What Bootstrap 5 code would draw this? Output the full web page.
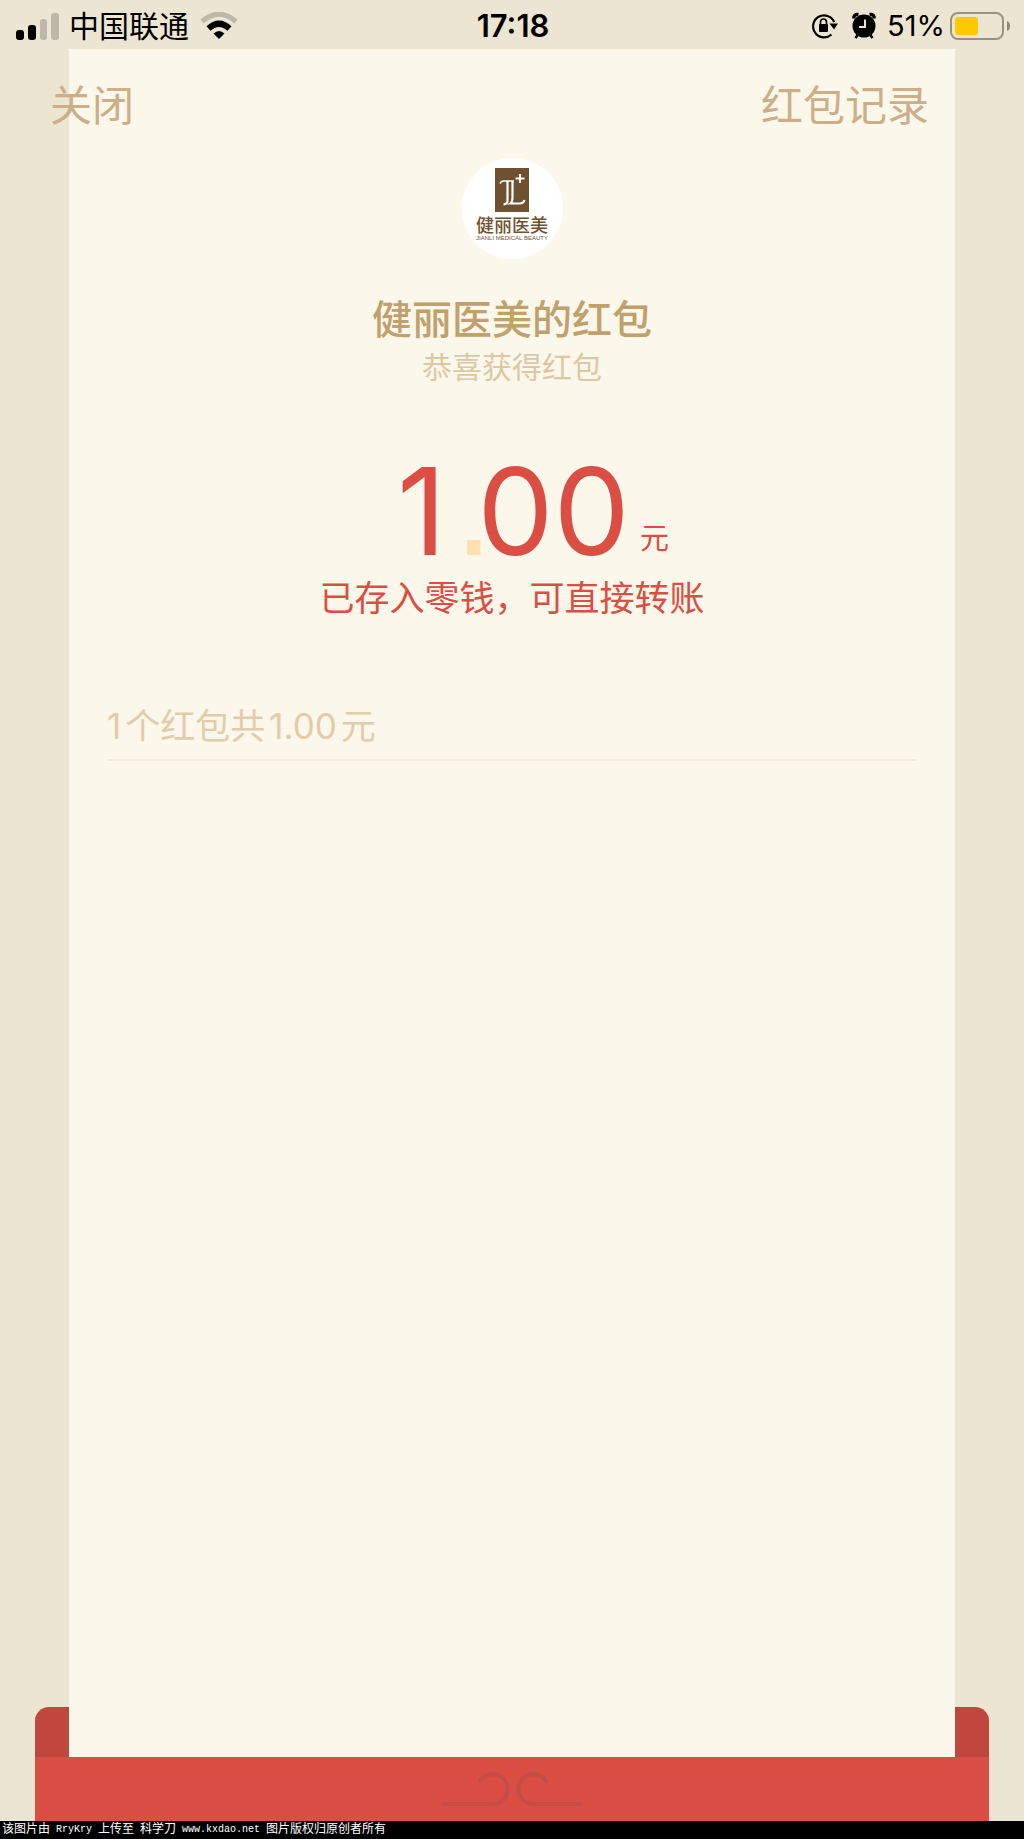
<!DOCTYPE html>
<html lang="zh-CN">
<head>
<meta charset="utf-8">
<meta name="viewport" content="width=device-width, initial-scale=1">
<title>红包</title>
<link href="https://cdn.jsdelivr.net/npm/bootstrap@5.3.0/dist/css/bootstrap.min.css" rel="stylesheet">
<style>
  body { background: #ece5d2; color: #000; font-family: Inter, "Noto Sans CJK SC", sans-serif; }
  .status { height: 49px; padding: 2px 14px 0 16px; font-size: 29px; line-height: 46px; }
  .status > div { flex: 1 1 0; }
  .status svg { flex: none; }
  .carrier { font-size: 30px; margin: 0 11px 0 9px; }
  .clock { font-size: 31px; font-weight: 600; }
  .stage { display: grid; grid-template-columns: 100%; }
  .stage > * { grid-area: 1 / 1; }
  .pocket { align-self: end; height: 50px; margin: 0 35px; border-radius: 14px 14px 0 0; background: #c0473e; }
  .sheet { margin: 0 69px; padding: 109px 38px 0; background: #fbf7ea; z-index: 1; }
  .actions { align-self: start; z-index: 2; padding: 25px 95px 0 50px; }
  .actions a { color: #ccaf88; font-size: 42px; line-height: 64px; }
  .logo { width: 101px; height: 101px; }
  .sender { font-size: 40px; font-weight: 500; line-height: 48px; color: #c0a16d; margin: 37px 0 3px; }
  .wish { font-size: 30px; line-height: 40px; color: #dcc8a5; }
  .red-ink { color: #da4e43; }
  .sum { font-size: 121px; line-height: 120px; margin-top: 64px; padding-left: 42px; }
  .point { color: #ffe0b0; font-family: "Liberation Sans", sans-serif; font-size: 140px; line-height: 40px; margin: 0 -16px 0 8px; }
  .unit { font-size: 29px; line-height: 40px; margin-left: 10px; padding-bottom: 12px; }
  .deposit { font-size: 35px; line-height: 48px; margin-top: 3px; }
  .tally { font-size: 35px; line-height: 48px; color: #e1cdab; margin-top: 80px; padding-bottom: 9px; border-bottom: 2px solid #f2ecdf; }
  .tally span { margin: 0 4px; }
  .tally span:first-child { margin-left: 0; }
  .front { height: 64px; margin: 0 35px; background: #da4e43; z-index: 2; }
  .credit { height: 18px; padding-left: 2px; background: #000; color: #fff; font: 12px/18px "Liberation Mono", "Noto Sans CJK SC", monospace; }
  .credit span { margin-right: 6px; }
  .credit .latin { font-size: 10px; }
</style>
<script src="https://cdn.jsdelivr.net/npm/bootstrap@5.3.0/dist/js/bootstrap.bundle.min.js"></script>
</head>
<body class="d-flex flex-column min-vh-100">
<header class="status d-flex align-items-center">
  <div class="d-flex align-items-center">
    <svg width="44" height="28" viewBox="0 0 44 28" aria-hidden="true">
      <rect x="0" y="18" width="8" height="10" rx="3"/><rect x="12" y="13" width="8" height="15" rx="3"/>
      <rect x="24" y="7" width="7" height="21" rx="3" fill="#bfb8aa"/><rect x="35" y="1" width="8" height="27" rx="3" fill="#bfb8aa"/>
    </svg>
    <span class="carrier">中国联通</span>
    <svg width="38" height="28" viewBox="0 0 38 28" aria-hidden="true">
      <path d="M2 9.500Q19-5 36 9.500" fill="none" stroke="#bfb8aa" stroke-width="5"/>
      <path d="M8.500 16.500Q19 7 29.500 16.500" fill="none" stroke="#000" stroke-width="6"/>
      <path d="M13.500 21.500Q19 16.500 24.500 21.500L19 27Z"/>
    </svg>
  </div>
  <time class="clock">17:18</time>
  <div class="d-flex align-items-center justify-content-end">
    <svg width="28" height="28" viewBox="0 0 28 28" aria-hidden="true">
      <path d="M20.500 22.500A11 11 0 1 1 23.200 10" fill="none" stroke="#000" stroke-width="2.200"/>
      <path d="M18.500 11.500h8.500l-4 6z"/><rect x="8" y="12" width="9" height="8" rx="1"/>
      <path d="M9.500 13V10a3 3 0 0 1 6 0v3" fill="none" stroke="#000" stroke-width="1.600"/>
    </svg>
    <svg class="mx-2" width="32" height="28" viewBox="-5 0 32 28" aria-hidden="true">
      <circle cx="12" cy="14" r="11.500"/><path d="M3.500 26l3-4M20.500 26l-3-4" stroke="#000" stroke-width="2.600"/>
      <path d="M1.800 6.500Q1.500 2 6.500 2.500M22.200 6.500Q22.500 2 17.500 2.500" fill="none" stroke="#000" stroke-width="3.400"/>
      <path d="M13 7.500v7.500H7" fill="none" stroke="#ece5d2" stroke-width="2"/>
    </svg>
    <span class="me-1">51%</span>
    <svg width="61" height="30" viewBox="0 0 61 30" aria-hidden="true">
      <rect x="2" y="2" width="52" height="26" rx="7" fill="none" stroke="#99927f" stroke-width="2"/>
      <rect x="6" y="6" width="23" height="18" rx="3" fill="#ffcb00"/><path d="M58 10q3 1 3 5t-3 5z" fill="#8d877c"/>
    </svg>
  </div>
</header>
<main class="stage flex-grow-1">
  <div class="pocket"></div>
  <section class="sheet text-center">
    <svg class="logo d-block mx-auto" viewBox="0 0 101 101" role="img" aria-label="健丽医美">
      <circle cx="50.500" cy="50.500" r="50.500" fill="#fff"/><rect x="33" y="10" width="34" height="44" fill="#6f5132"/>
      <path d="M38 25.500q1-2.500 4-2.500h10" fill="none" stroke="#fff" stroke-width="1.600"/>
      <path d="M45.500 23v20q0 3-4 3.500M50.500 23v16q0 5-2 6.500h9q4 0 5-3.500" fill="none" stroke="#fff" stroke-width="2.200"/>
      <path d="M58 16v9M53.500 20.500h9" stroke="#fff" stroke-width="1.800"/>
      <text x="50" y="74" text-anchor="middle" font-family="Noto Sans CJK SC, sans-serif" font-size="18" font-weight="500" fill="#6f5132">健丽医美</text>
      <text x="50" y="82" text-anchor="middle" font-family="Liberation Sans, sans-serif" font-size="6" fill="#6f5132">JIANLI MEDICAL BEAUTY</text>
    </svg>
    <h1 class="sender">健丽医美的红包</h1>
    <p class="wish mb-0">恭喜获得红包</p>
    <p class="sum red-ink d-flex justify-content-center align-items-end mb-0"><span class="d-flex align-items-baseline"><span>1</span><span class="point">.</span><span>00</span></span><span class="unit">元</span></p>
    <p class="deposit red-ink mb-0">已存入零钱，可直接转账</p>
    <p class="tally text-start mb-0"><span>1</span>个红包共<span>1.00</span>元</p>
  </section>
  <nav class="actions d-flex justify-content-between">
    <a class="text-decoration-none" href="#">关闭</a>
    <a class="text-decoration-none" href="#">红包记录</a>
  </nav>
</main>
<div class="front d-flex justify-content-center align-items-center">
  <svg width="140" height="36" viewBox="0 0 140 36" fill="none" stroke="#c44e47" stroke-width="4" stroke-linecap="round" aria-hidden="true">
    <path d="M3 33H50A15 15 0 1 0 38 10M137 33H92A15 15 0 1 1 104 10"/>
  </svg>
</div>
<footer class="credit d-flex"><span>该图片由</span><span class="latin">RryKry</span><span>上传至</span><span>科学刀</span><span class="latin">www.kxdao.net</span><span>图片版权归原创者所有</span></footer>
</body>
</html>
